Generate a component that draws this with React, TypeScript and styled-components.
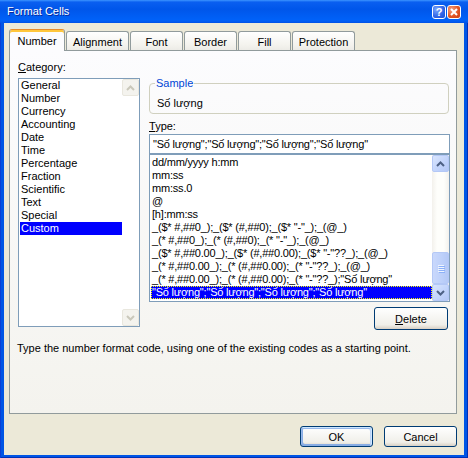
import React from "react";
import styled, { createGlobalStyle } from "styled-components";

const GlobalStyle = createGlobalStyle`
  html, body { margin: 0; padding: 0; background: #fff; }
  body { font-family: "Liberation Sans", Arial, "Noto Sans", sans-serif; font-size: 11px; color: #000; }
  * { box-sizing: border-box; }
`;

const Window = styled.div`
  width: 468px;
  height: 458px;
  display: flex;
  flex-direction: column;
  background: #0055e5;
`;

const TitleBar = styled.div`
  height: 23px;
  flex: none;
  display: flex;
  align-items: center;
  padding: 0 7px 0 7px;
  background: linear-gradient(180deg, #3d95ff 0%, #0a5ff0 9%, #0056ea 40%, #0061f8 85%, #005cf2 93%, #0050e4 100%);
`;

const Title = styled.div`
  flex: 1;
  color: #fff;
  font-size: 11px;
  line-height: 13px;
  text-shadow: 1px 1px #0a2a9c;
`;

const CaptionButtons = styled.div`
  display: flex;
  gap: 1px;
`;

const CaptionButton = styled.div<{ $kind: "help" | "close" }>`
  width: 14px;
  height: 14px;
  border: 1px solid #fff;
  border-radius: 3px;
  display: flex;
  align-items: center;
  justify-content: center;
  color: #fff;
  font-weight: bold;
  font-size: 11px;
  line-height: 12px;
  background: ${(p) =>
    p.$kind === "close"
      ? "radial-gradient(circle at 30% 30%, #f3a083, #e0521f 60%, #c8401a)"
      : "radial-gradient(circle at 30% 30%, #7aa7ff, #2e63e6 60%, #1b4fd6)"};
`;

const Frame = styled.div`
  flex: 1;
  display: flex;
  padding: 0 4px 3px 4px;
  box-shadow: inset 1px 0 #0a3fd6, inset -1px 0 #0030b8, inset 0 -1px #0030b8;
`;

const Body = styled.div`
  flex: 1;
  display: flex;
  flex-direction: column;
  background: #ece9d8;
  padding: 6px 7px 8px 5px;
`;

const TabRow = styled.div`
  height: 21px;
  display: flex;
  align-items: flex-end;
  gap: 1px;
`;

const Tab = styled.div<{ $w: number; $active?: boolean }>`
  position: relative;
  z-index: ${(p) => (p.$active ? 2 : 1)};
  width: ${(p) => p.$w}px;
  height: ${(p) => (p.$active ? 22 : 19)}px;
  margin-bottom: ${(p) => (p.$active ? -1 : 0)}px;
  border: 1px solid #919b9c;
  border-bottom: none;
  border-top-color: ${(p) => (p.$active ? "#e68b2c" : "#919b9c")};
  border-radius: 3px 3px 0 0;
  padding-top: ${(p) => (p.$active ? 5 : 4)}px;
  text-align: center;
  line-height: 13px;
  background: ${(p) => (p.$active ? "#fcfcfe" : "linear-gradient(180deg, #ffffff, #f4f3ee 70%, #ecebe6)")};
  box-shadow: ${(p) => (p.$active ? "inset 0 2px #ffc73c" : "none")};
`;

const Panel = styled.div`
  height: 364px;
  display: flex;
  flex-direction: column;
  border: 1px solid #919b9c;
  background: linear-gradient(180deg, #fcfcfe, #f4f3ee);
  padding: 10px 6px 0 8px;
`;

const Columns = styled.div`
  display: grid;
  grid-template-columns: 122px 301px;
  column-gap: 9px;
  align-items: start;
`;

const Column = styled.div`
  display: flex;
  flex-direction: column;
`;

const Label = styled.div<{ $mt?: number; $mb?: number }>`
  line-height: 13px;
  margin-top: ${(p) => p.$mt || 0}px;
  margin-bottom: ${(p) => p.$mb || 0}px;
`;

const ListBox = styled.div<{ $h: number }>`
  height: ${(p) => p.$h}px;
  display: flex;
  background: #fff;
  border: 1px solid #7f9db9;
`;

const Items = styled.div<{ $pt: number; $tight?: boolean }>`
  flex: 1;
  min-width: 0;
  overflow: hidden;
  padding-top: ${(p) => p.$pt}px;
  letter-spacing: ${(p) => (p.$tight ? "-0.2px" : "normal")};
`;

const Item = styled.div<{ $selected?: boolean; $focus?: boolean }>`
  height: 13px;
  line-height: 13px;
  margin-left: 1px;
  padding-left: 1px;
  white-space: nowrap;
  overflow: hidden;
  background: ${(p) => (p.$selected ? "#0000ff" : "transparent")};
  color: ${(p) => (p.$selected ? "#fff" : "#000")};
  outline: ${(p) => (p.$focus ? "1px dotted #ffff00" : "none")};
  outline-offset: -1px;
`;

const ScrollBar = styled.div<{ $track: string }>`
  width: 17px;
  flex: none;
  display: flex;
  flex-direction: column;
  background: ${(p) => p.$track};
`;

const Arrow = styled.div<{ $disabled?: boolean }>`
  width: 17px;
  height: 17px;
  flex: none;
  display: flex;
  align-items: center;
  justify-content: center;
  border: 1px solid ${(p) => (p.$disabled ? "#e9e7de" : "#b4c8f6")};
  border-radius: 2px;
  background: ${(p) => (p.$disabled ? "#f4f3ee" : "linear-gradient(135deg, #d9e5fd, #c1d3fb 60%, #b4c8f6)")};
`;

const Track = styled.div`
  flex: 1;
  display: flex;
  flex-direction: column;
  justify-content: flex-end;
`;

const Thumb = styled.div`
  height: 32px;
  border: 1px solid #b4c8f6;
  border-radius: 2px;
  background: linear-gradient(90deg, #c9d8fc, #bdd0fa 60%, #b4c8f6);
  display: flex;
  flex-direction: column;
  align-items: center;
  justify-content: center;
  gap: 1px;
`;

const Grip = styled.span`
  width: 6px;
  height: 1px;
  background: #eef4fe;
  box-shadow: 1px 1px #8cb0f8;
`;

const GroupBox = styled.fieldset`
  margin: 16px 0 0 0;
  width: 300px;
  border: 1px solid #d0d0bf;
  border-radius: 4px;
  padding: 0 7px 3px 7px;
  min-inline-size: 0;
`;

const Legend = styled.legend`
  color: #0046d5;
  line-height: 13px;
  padding: 0 1px;
  margin-left: -2px;
`;

const SampleText = styled.div`
  margin-top: 7px;
  line-height: 13px;
`;

const TextInput = styled.div`
  height: 20px;
  border: 1px solid #7f9db9;
  background: #fff;
  padding: 0 3px;
  line-height: 18px;
  white-space: nowrap;
  letter-spacing: -0.2px;
`;

const Button = styled.div<{ $default?: boolean; $w: number; $h: number }>`
  width: ${(p) => p.$w}px;
  height: ${(p) => p.$h}px;
  display: flex;
  align-items: center;
  justify-content: center;
  border: 1px solid #003c74;
  border-radius: 3px;
  background: linear-gradient(180deg, #ffffff, #f0efe9 80%, #d8d0c4);
  box-shadow: ${(p) =>
    p.$default
      ? "inset -1px 1px #cee7ff, inset 1px 2px #98b8ea, inset -2px 2px #bcd4f6, inset 1px -1px #89ade4, inset 2px -2px #89ade4"
      : "none"};
`;

const DeleteRow = styled.div`
  display: flex;
  justify-content: flex-end;
  margin-top: 5px;
  padding-right: 2px;
`;

const Description = styled.div`
  margin: 12px 0 0 -1px;
  line-height: 13px;
`;

const ButtonRow = styled.div`
  margin-top: 12px;
  display: flex;
  justify-content: flex-end;
  gap: 11px;
`;

const Chevron = ({ up, color }: { up?: boolean; color: string }) => (
  <svg width="9" height="6" viewBox="0 0 9 6">
    <path d={up ? "M1 5 L4.5 1.5 L8 5" : "M1 1 L4.5 4.5 L8 1"} fill="none" stroke={color} strokeWidth="2" />
  </svg>
);

const categories = [
  "General", "Number", "Currency", "Accounting", "Date", "Time", "Percentage",
  "Fraction", "Scientific", "Text", "Special", "Custom",
];

const formats = [
  "dd/mm/yyyy h:mm",
  "mm:ss",
  "mm:ss.0",
  "@",
  "[h]:mm:ss",
  '_($* #,##0_);_($* (#,##0);_($* "-"_);_(@_)',
  '_(* #,##0_);_(* (#,##0);_(* "-"_);_(@_)',
  '_($* #,##0.00_);_($* (#,##0.00);_($* "-"??_);_(@_)',
  '_(* #,##0.00_);_(* (#,##0.00);_(* "-"??_);_(@_)',
  '_(* #,##0.00_);_(* (#,##0.00);_(* "-"??_);"Số lượng"',
  '"Số lượng";"Số lượng";"Số lượng";"Số lượng"',
];

const tabs = [
  { name: "Number", w: 56 },
  { name: "Alignment", w: 63 },
  { name: "Font", w: 53 },
  { name: "Border", w: 53 },
  { name: "Fill", w: 53 },
  { name: "Protection", w: 63 },
];

export default function App() {
  return (
    <>
      <GlobalStyle />
      <Window>
        <TitleBar>
          <Title>Format Cells</Title>
          <CaptionButtons>
            <CaptionButton $kind="help">?</CaptionButton>
            <CaptionButton $kind="close">
              <svg width="8" height="8" viewBox="0 0 8 8">
                <path d="M1 1 L7 7 M7 1 L1 7" stroke="#fff" strokeWidth="2" />
              </svg>
            </CaptionButton>
          </CaptionButtons>
        </TitleBar>
        <Frame>
          <Body>
            <TabRow>
              {tabs.map((t, i) => (
                <Tab key={t.name} $w={t.w} $active={i === 0}>
                  {t.name}
                </Tab>
              ))}
            </TabRow>
            <Panel>
              <Columns>
                <Column>
                  <Label $mb={4}>
                    <u>C</u>ategory:
                  </Label>
                  <ListBox $h={249}>
                    <Items $pt={0}>
                      {categories.map((c) => (
                        <Item key={c} $selected={c === "Custom"}>
                          {c}
                        </Item>
                      ))}
                    </Items>
                    <ScrollBar $track="#fff">
                      <Arrow $disabled>
                        <Chevron up color="#cac8bb" />
                      </Arrow>
                      <Track />
                      <Arrow $disabled>
                        <Chevron color="#cac8bb" />
                      </Arrow>
                    </ScrollBar>
                  </ListBox>
                </Column>
                <Column>
                  <GroupBox>
                    <Legend>Sample</Legend>
                    <SampleText>Số lượng</SampleText>
                  </GroupBox>
                  <Label $mt={6} $mb={1}>
                    <u>T</u>ype:
                  </Label>
                  <TextInput>"Số lượng";"Số lượng";"Số lượng";"Số lượng"</TextInput>
                  <ListBox $h={148}>
                    <Items $pt={1} $tight>
                      {formats.map((f, i) => (
                        <Item key={f} $selected={i === formats.length - 1} $focus={i === formats.length - 1}>
                          {f}
                        </Item>
                      ))}
                    </Items>
                    <ScrollBar $track="linear-gradient(90deg, #f3f1ec, #fefefb 30%, #fefefb 70%, #f3f1ec)">
                      <Arrow>
                        <Chevron up color="#4d6185" />
                      </Arrow>
                      <Track>
                        <Thumb>
                          <Grip />
                          <Grip />
                          <Grip />
                          <Grip />
                        </Thumb>
                      </Track>
                      <Arrow>
                        <Chevron color="#4d6185" />
                      </Arrow>
                    </ScrollBar>
                  </ListBox>
                  <DeleteRow>
                    <Button $w={74} $h={23}>
                      <span>
                        <u>D</u>elete
                      </span>
                    </Button>
                  </DeleteRow>
                </Column>
              </Columns>
              <Description>
                Type the number format code, using one of the existing codes as a starting point.
              </Description>
            </Panel>
            <ButtonRow>
              <Button $default $w={73} $h={21}>
                OK
              </Button>
              <Button $w={73} $h={21}>
                Cancel
              </Button>
            </ButtonRow>
          </Body>
        </Frame>
      </Window>
    </>
  );
}
